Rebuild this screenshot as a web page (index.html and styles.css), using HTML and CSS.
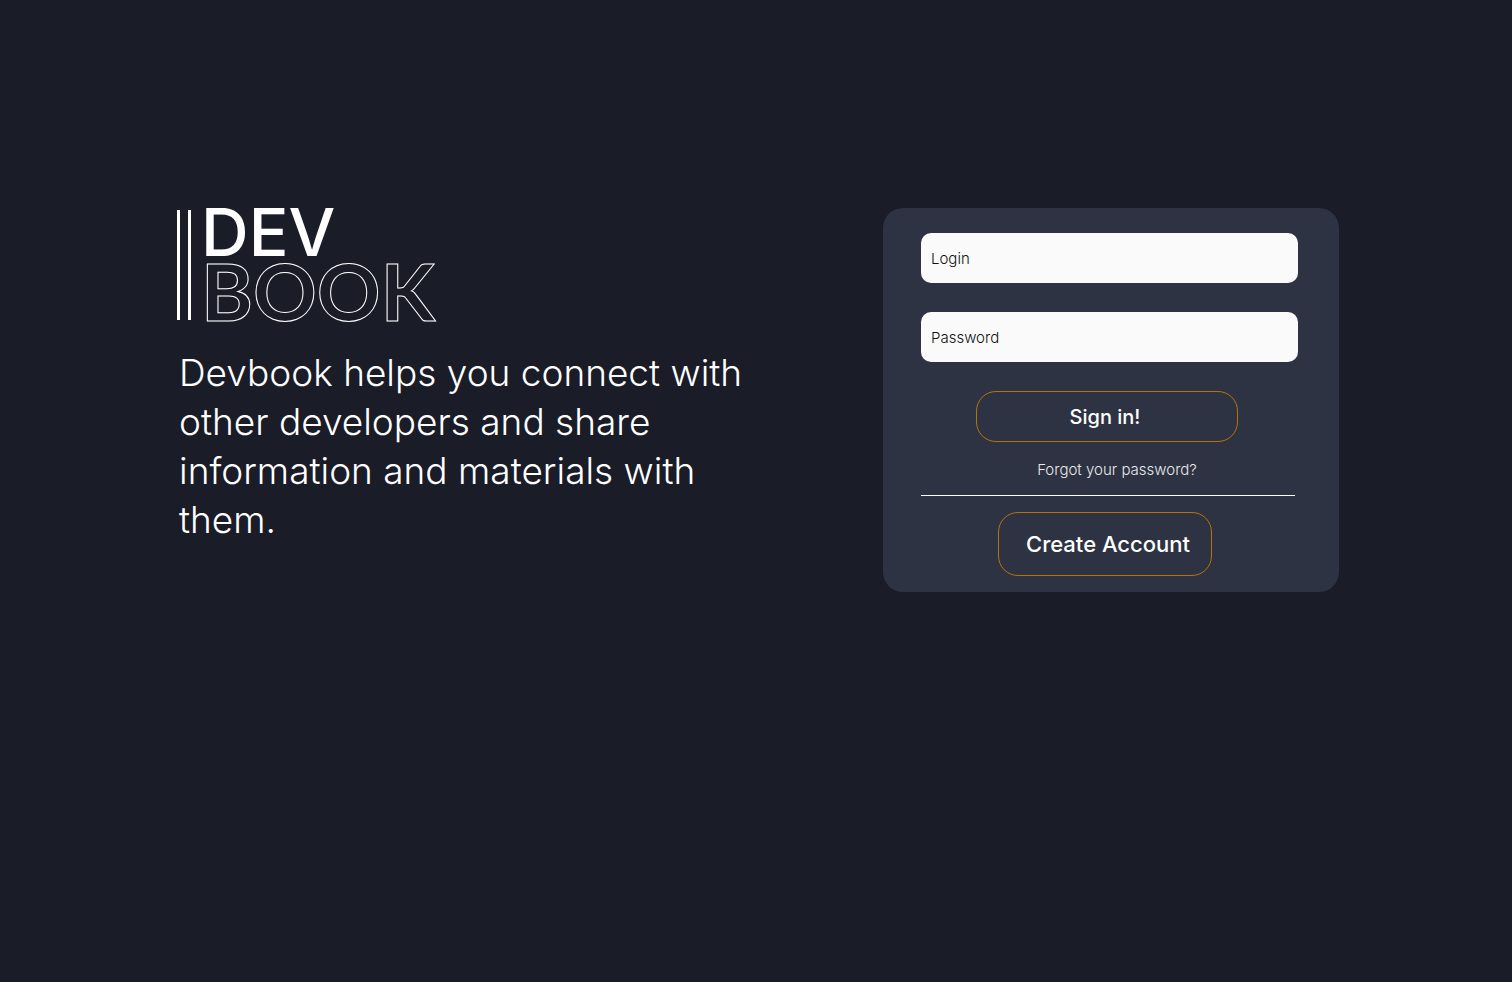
FILE: index.html
```html
<!DOCTYPE html>
<html lang="en">
<head>
<meta charset="utf-8">
<meta name="viewport" content="width=device-width, initial-scale=1">
<title>Devbook</title>
<link rel="stylesheet" href="styles.css">
</head>
<body>
<main class="page">
  <section class="intro">
    <h1 class="logo">
      <span class="logo-bars"></span>
      <span class="logo-words">
        <span class="logo-dev">DEV</span>
        <span class="logo-book">BOOK</span>
      </span>
    </h1>
    <p class="tagline">Devbook helps you connect with other developers and share information and materials with them.</p>
  </section>
  <form class="card">
    <input class="field" type="text" placeholder="Login" aria-label="Login">
    <input class="field" type="password" placeholder="Password" aria-label="Password">
    <button class="button sign-in" type="submit">Sign in!</button>
    <a class="forgot" href="#">Forgot your password?</a>
    <hr class="divider">
    <button class="button create" type="button">Create Account</button>
  </form>
</main>
</body>
</html>
```
FILE: styles.css
```css
* {
  box-sizing: border-box;
}

body {
  margin: 0;
  min-height: 100vh;
  background: #1a1c27;
  color: #fff;
  font-family: Inter, "Liberation Sans", sans-serif;
}

.page {
  display: flex;
  flex-wrap: wrap;
  justify-content: space-between;
  align-items: flex-start;
  gap: 48px;
  padding: 208px 173px 48px 177px;
}

.intro {
  flex: 0 1 600px;
}

.logo {
  display: flex;
  gap: 10px;
  height: 116px;
  margin: 0;
  padding-top: 2px;
}

.logo-bars {
  width: 14px;
  height: 110px;
  border: solid #fff;
  border-width: 0 3px;
}

.logo-words {
  display: flex;
  flex-direction: column;
  margin-top: -6px;
}

.logo-dev {
  font-size: 66px;
  font-weight: 500;
  line-height: 56px;
}

.logo-book {
  font-family: Lato, "Liberation Sans", sans-serif;
  font-size: 79px;
  font-weight: 700;
  line-height: 62px;
  color: transparent;
  -webkit-text-stroke: 1px #fff;
}

.tagline {
  margin: 24px 0 0;
  padding-left: 2px;
  font-size: 37px;
  font-weight: 300;
  line-height: 49px;
}

.card {
  display: flex;
  flex-direction: column;
  flex: 0 1 456px;
  padding: 25px 41px 16px 38px;
  border-radius: 20px;
  background: #2e3343;
}

.field {
  width: 100%;
  height: 50px;
  margin: 0 0 29px;
  padding: 0 10px;
  border: 0;
  border-radius: 10px;
  background: #fafafa;
  color: #111;
  font: 300 15px Inter, "Liberation Sans", sans-serif;
}

.field::placeholder {
  color: #111;
  opacity: 1;
}

.button {
  border: 1px solid #b87306;
  border-radius: 20px;
  background: transparent;
  color: #fff;
  font-family: inherit;
  font-weight: 500;
}

.sign-in {
  height: 51px;
  margin: 0 60px 0 55px;
  padding: 0 4px 0 0;
  font-size: 20px;
}

.forgot {
  align-self: center;
  margin: 18px 0 15px;
  padding-left: 15px;
  color: #e8e9ec;
  font-size: 15px;
  font-weight: 300;
  line-height: 20px;
  text-decoration: none;
}

.divider {
  width: auto;
  height: 1px;
  margin: 0 3px 16px 0;
  border: 0;
  background: #fff;
}

.create {
  height: 64px;
  margin: 0 86px 0 77px;
  padding: 0 0 0 6px;
  font-size: 22px;
}
```
